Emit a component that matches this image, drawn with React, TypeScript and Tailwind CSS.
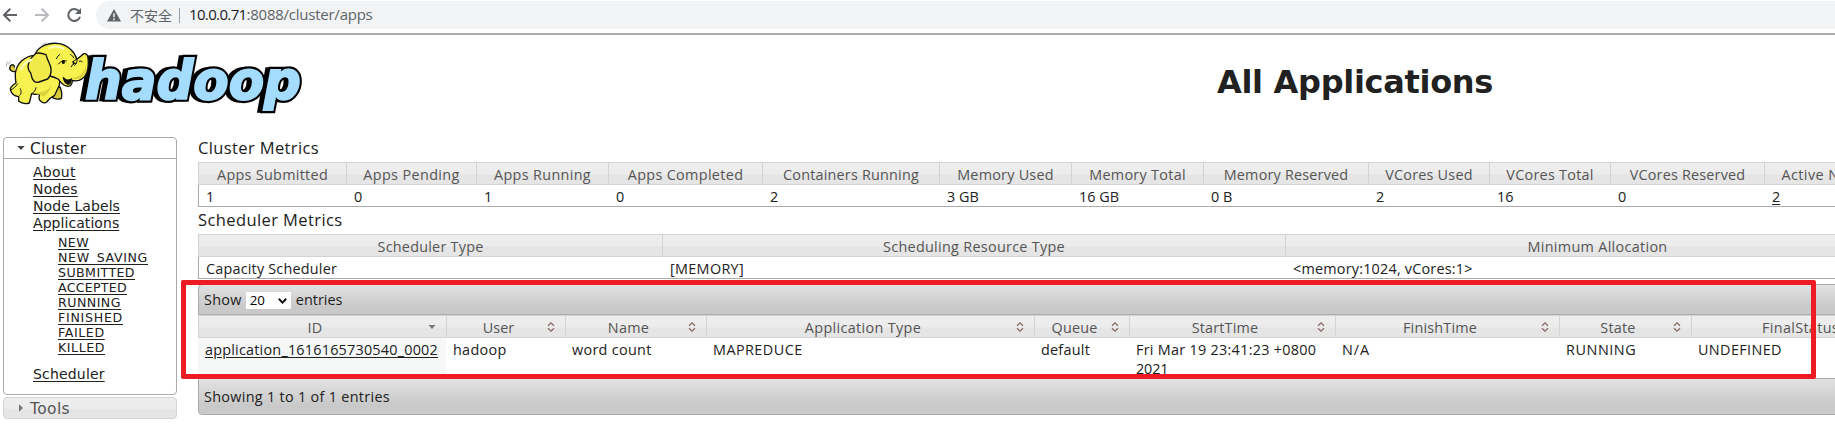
import React, { useLayoutEffect, useRef, useState } from "react";

/** Inline text whose letter spacing is tuned so that it takes up `w` pixels. */
function T({ w, children, className = "" }: { w?: number; children: string; className?: string }) {
  const ref = useRef<HTMLSpanElement>(null);
  const [spacing, setSpacing] = useState(0);
  useLayoutEffect(() => {
    if (!ref.current || !w) return;
    const natural = ref.current.getBoundingClientRect().width;
    setSpacing((w + 1 - natural) / children.length);
  }, [w, children]);
  return (
    <span ref={ref} className={`inline-block whitespace-pre ${className}`} style={{ letterSpacing: `${spacing}px` }}>
      {children}
    </span>
  );
}

const headBg = "bg-linear-to-b from-[#eeeeee] from-0% via-[#ececec] via-50% to-[#e5e5e5] to-60%";
const barBg = "bg-linear-to-b from-[#e2e2e2] to-[#c9c9c9] to-75%";

type Metric = { label: string; lw: number; value: string; col: string; link?: boolean };

const clusterMetrics: Metric[] = [
  { label: "Apps Submitted", lw: 110, value: "1", col: "w-[148px]" },
  { label: "Apps Pending", lw: 95.4, value: "0", col: "w-[130px]" },
  { label: "Apps Running", lw: 96, value: "1", col: "w-[132px]" },
  { label: "Apps Completed", lw: 114.6, value: "0", col: "w-[154px]" },
  { label: "Containers Running", lw: 135, value: "2", col: "w-[177px]" },
  { label: "Memory Used", lw: 95.7, value: "3 GB", col: "w-[132px]" },
  { label: "Memory Total", lw: 95.7, value: "16 GB", col: "w-[132px]" },
  { label: "Memory Reserved", lw: 123.6, value: "0 B", col: "w-[165px]" },
  { label: "VCores Used", lw: 86.4, value: "2", col: "w-[121px]" },
  { label: "VCores Total", lw: 86.4, value: "16", col: "w-[121px]" },
  { label: "VCores Reserved", lw: 114.6, value: "0", col: "w-[154px]" },
  { label: "Active Nodes", lw: 91, value: "2", col: "w-[126px]", link: true },
];

const schedulerMetrics = [
  { label: "Scheduler Type", lw: 105, value: "Capacity Scheduler", vw: 130, col: "w-[464px]" },
  { label: "Scheduling Resource Type", lw: 181, value: "[MEMORY]", vw: 73, col: "w-[623px]" },
  { label: "Minimum Allocation", lw: 139, value: "<memory:1024, vCores:1>", vw: 178.6, col: "w-[624px]" },
];

const appColumns = [
  { label: "ID", lw: 14, col: "w-[248px]", lines: [["application_1616165730540_0002", 232]], sorted: true },
  { label: "User", lw: 30.4, col: "w-[119px]", lines: [["hadoop", 52.5]] },
  { label: "Name", lw: 40.4, col: "w-[141px]", lines: [["word count", 78.6]] },
  { label: "Application Type", lw: 115.4, col: "w-[328px]", lines: [["MAPREDUCE", 88.6]] },
  { label: "Queue", lw: 45, col: "w-[95px]", lines: [["default", 48]] },
  { label: "StartTime", lw: 65.7, col: "w-[206px]", lines: [["Fri Mar 19 23:41:23 +0800", 179.3], ["2021", 31.4]] },
  { label: "FinishTime", lw: 73, col: "w-[224px]", lines: [["N/A", 27]] },
  { label: "State", lw: 34.3, col: "w-[132px]", lines: [["RUNNING", 69.3]] },
  { label: "FinalStatus", lw: 76, col: "w-[233px]", lines: [["UNDEFINED", 82.9]] },
] as { label: string; lw: number; col: string; lines: [string, number][]; sorted?: boolean }[];

const mainLinks: [string, number][] = [["About", 41.7], ["Nodes", 43.7], ["Node Labels", 86], ["Applications", 85.3]];
const stateLinks: [string, number][] = [
  ["NEW", 30], ["NEW_SAVING", 89], ["SUBMITTED", 76], ["ACCEPTED", 68],
  ["RUNNING", 62], ["FINISHED", 64], ["FAILED", 45.7], ["KILLED", 46],
];

function BrowserBar() {
  return (
    <div className="flex h-[35px] items-start border-b-2 border-[#ababab] bg-white">
      <svg className="mt-px h-7 w-[96px] shrink-0" viewBox="0 0 96 28" fill="none" strokeWidth="2">
        <path d="M17 14H4.5M10.3 7.7L4 14l6.3 6.3" stroke="#5f6368" />
        <path d="M35 14h12.5M41.7 7.7L48 14l-6.3 6.3" stroke="#b9babd" />
        <path d="M79 10.2A6 6 0 1 0 80 15.8" stroke="#5f6368" />
        <path d="M81 7v6h-6z" fill="#5f6368" />
      </svg>
      <div className="mt-px flex h-7 flex-1 items-center rounded-l-full bg-[#f1f3f4] pl-[11px] text-[15px]">
        <svg className="h-[13px] w-[14px]" viewBox="0 0 14 13">
          <path d="M7 0l7 12.5H0z" fill="#5f6368" />
          <path d="M7 4.3v4M7 9.6v1.6" stroke="#f1f3f4" strokeWidth="1.5" />
        </svg>
        <span className="mb-px ml-[9px] w-[43px] font-['Noto_Sans_CJK_SC',sans-serif] text-[14px] leading-7 text-[#5f6368]">不安全</span>
        <span className="ml-[6px] mr-[9px] h-[15px] w-px bg-[#9aa0a6]" />
        <T w={56.5} className="mb-[2px] text-[#202124]">10.0.0.71</T>
        <T w={125} className="mb-[2px] text-[#5f6368]">:8088/cluster/apps</T>
      </div>
    </div>
  );
}

function Logo() {
  const word = {
    x: 255,
    textLength: 648,
    lengthAdjust: "spacingAndGlyphs" as const,
    fontSize: 162,
    fontWeight: 700,
    fontStyle: "oblique",
    fontFamily: "'DejaVu Sans', sans-serif",
    strokeLinejoin: "miter" as const,
  };
  return (
    <svg className="block h-[95px] w-[320px]" viewBox="0 105 960 285">
      <text {...word} x={244} y={298} fill="#000" stroke="#000" strokeWidth="16">hadoop</text>
      <text {...word} y={296} fill="#000" stroke="#000" strokeWidth="19">hadoop</text>
      <text {...word} y={296} fill="#a3dcff" stroke="#a3dcff" strokeWidth="6">hadoop</text>
      <g transform="translate(0 114)" stroke="#111" strokeWidth="4" strokeLinejoin="round" strokeLinecap="round" fill="#f8f250">
        <path d="M46 100C34 104 26 94 31 84c5-7 13-3 12 3" fill="#d9c83c" />
        <path d="M20 84c-2-5-1-9 3-12M27 78c0-3 1-6 4-8M126 24c3-6 7-9 12-9M130 30c3-4 5-6 9-7" fill="none" stroke="#777" strokeWidth="2" />
        <path d="M160 150l-4 28c8 7 22 6 28 3 4-12 1-22-4-34z" fill="#d8cc3a" />
        <path d="M104 52C74 54 50 76 46 106c0 10 0 20 2 28-7 6-18 12-17 20 3 14 12 20 25 22l0 14c8 6 22 8 32 5l7-28c8 3 16 2 24 0-2 6-3 10-1 18 6 9 16 12 22 7 6-8 14-15 24-20l14-30 4-40z" />
        <path d="M100 164c14 3 42-4 54-20-4 16-12 24-24 32l-10-6z" fill="#ddd23e" stroke="none" />
        <path d="M52 138c-6 10-12 14-20 18M59 172c6-4 5-12 2-20M97 166c6-4 10-10 11-17" fill="none" strokeWidth="3" />
        <path d="M106 48C116 24 148 12 178 17c26 5 46 24 52 46 8-2 14-12 22-16 10-2 13 8 13 26 0 28-8 48-28 54-8 2-14 2-20 0 0 10-4 18-13 18-16-1-22-14-30-22-8-5-16-7-24-9z" />
        <path d="M215 118c24 2 38-14 44-40 1 24-8 40-24 45-8 2-14 0-20-5z" fill="#ddd23e" stroke="none" />
        <path d="M108 46C90 60 78 84 88 100c6 5 6 10 7 17 4 14 12 18 22 15l26-9c14-14 12-34 5-47-5-10-8-17-10-26-10-4-20-7-30-4z" fill="#f2e94a" />
        <path d="M64 92c8-16 20-24 30-26M150 30c14-6 30-4 40 2" stroke="#fffcb8" strokeWidth="7" fill="none" />
        <path d="M190 119c7 8 17 9 24 4-1 12-5 17-12 15-7-3-10-10-12-19z" fill="#171003" />
        <path d="M170 62c2-7 5-10 9-12M212 50c5 2 8 6 9 10M175 78c8-9 17-12 24-9M217 72c4-4 9-5 14-9M214 86c3-8 8-10 14-10M231 64c1 9-2 14-7 18M238 70c4-2 7-1 9 2" fill="none" strokeWidth="3" />
        <ellipse cx="190" cy="72" rx="5" ry="6" fill="#111" stroke="none" />
        <ellipse cx="221" cy="75" rx="3" ry="5" fill="#111" stroke="none" />
      </g>
    </svg>
  );
}

function Sidebar() {
  return (
    <nav className="w-[174px] shrink-0 font-['DejaVu_Sans',sans-serif] text-[#212121]">
      <div className="h-[258px] rounded-[4px] border border-[#aaa] bg-white">
        <div className="flex h-[21px] items-center border-b border-[#aaa] pl-[13px] text-[15.5px] leading-5">
          <svg className="mr-[5px] h-2 w-2" viewBox="0 0 8 8"><path d="M0.3 2h7.4L4 6z" fill="#454545" /></svg>
          <T w={55.3} className="mt-px">Cluster</T>
        </div>
        <ul className="pl-[29px] pt-[5px] text-[14px]">
          {mainLinks.map(([t, w]) => (
            <li key={t} className="h-[17px] leading-[17px]"><T w={w} className="underline underline-offset-2">{t}</T></li>
          ))}
        </ul>
        <ul className="pl-[54px] pt-[3px] text-[12.6px]">
          {stateLinks.map(([t, w]) => (
            <li key={t} className="h-[15px] leading-[15px]"><T w={w} className="underline underline-offset-2">{t}</T></li>
          ))}
        </ul>
        <div className="pl-[29px] pt-[11px] text-[14px] leading-[17px]"><T w={70.7} className="underline underline-offset-2">Scheduler</T></div>
      </div>
      <div className={`mt-[2px] flex h-[22px] items-center rounded-[4px] border border-[#d3d3d3] pl-[13px] text-[15.5px] leading-5 text-[#555] ${headBg}`}>
        <svg className="mr-[5px] h-2 w-2" viewBox="0 0 8 8"><path d="M2 0.3v7.4L6 4z" fill="#777" /></svg>
        <T w={39} className="mt-px">Tools</T>
      </div>
    </nav>
  );
}

function SortIcon({ sorted }: { sorted?: boolean }) {
  return (
    <svg className="mr-[10px] mt-[5px] h-[10px] w-[8px] shrink-0" viewBox="0 0 8 10" fill="none">
      {sorted ? <path d="M0.5 3h7L4 7z" fill="#777" /> : <path d="M1 3.8L4 0.9l3 2.9M1 6.2l3 2.9 3-2.9" stroke="#876b66" strokeWidth="1.3" />}
    </svg>
  );
}

function MetricHead({ label, w, col }: { label: string; w: number; col: string }) {
  return (
    <div className={`shrink-0 border-r border-[#d3d3d3] pt-px text-center leading-[21px] text-[#555] ${col}`}><T w={w}>{label}</T></div>
  );
}

export default function App() {
  return (
    <div className="relative h-[445px] w-[1835px] overflow-hidden bg-white font-['Open_Sans','Noto_Sans',sans-serif] text-[14.4px] text-[#212121]">
      <BrowserBar />
      <header className="flex h-[102px] items-start">
        <Logo />
        <h1 className="ml-[897px] mt-[27px] font-['DejaVu_Sans',sans-serif] text-[32px] font-bold leading-[40px]"><T w={275}>All Applications</T></h1>
      </header>
      <div className="flex pl-[3px]">
        <Sidebar />
        <main className="ml-[21px] w-[1718px] shrink-0">
          <h2 className="h-[25px] pt-px text-[16.5px] leading-[19px]"><T w={120}>Cluster Metrics</T></h2>
          <section className="border-b border-l border-[#aaa]">
            <div className={`-ml-px flex h-[23px] border border-[#d3d3d3] ${headBg}`}>
              {clusterMetrics.map((m) => <MetricHead key={m.label} label={m.label} w={m.lw} col={m.col} />)}
            </div>
            <div className="flex h-[21px] leading-[23px]">
              {clusterMetrics.map((m) => (
                <div key={m.label} className={`shrink-0 pl-[7px] ${m.col} ${m.link ? "underline underline-offset-2" : ""}`}>{m.value}</div>
              ))}
            </div>
          </section>
          <h2 className="h-[27px] pt-[3px] text-[16.5px] leading-[19px]"><T w={143.6}>Scheduler Metrics</T></h2>
          <section className="border-b border-l border-[#aaa]">
            <div className={`-ml-px flex h-[23px] border border-[#d3d3d3] ${headBg}`}>
              {schedulerMetrics.map((m) => <MetricHead key={m.label} label={m.label} w={m.lw} col={m.col} />)}
            </div>
            <div className="flex h-[21px] leading-[23px]">
              {schedulerMetrics.map((m) => (
                <div key={m.label} className={`shrink-0 pl-[7px] ${m.col}`}><T w={m.vw}>{m.value}</T></div>
              ))}
            </div>
          </section>

          <section className="mt-[5px]">
            <div className={`flex h-[31px] items-center rounded-tl-[4px] border border-[#aaa] pl-[5px] ${barBg}`}>
              <T w={36.8}>Show</T>
              <span className="ml-[4px] mr-[5px] mt-[2px] flex h-[17px] w-[45px] items-center bg-white pl-[4px] text-[13.3px] leading-[17px] text-black">
                <T w={14}>20</T>
                <svg className="ml-[13px] h-[6px] w-[9px]" viewBox="0 0 9 6" fill="none"><path d="M0.8 0.8l3.7 3.8L8.2 0.8" stroke="#111" strokeWidth="2" /></svg>
              </span>
              <T w={45.7}>entries</T>
            </div>
            <div className={`flex h-[23px] border-y border-l border-[#d3d3d3] ${headBg}`}>
              {appColumns.map((c) => (
                <div key={c.label} className={`flex shrink-0 items-start border-r border-[#d3d3d3] pt-px leading-[21px] text-[#555] ${c.col}`}>
                  <div className="flex-1 pl-[3px] text-center"><T w={c.lw}>{c.label}</T></div>
                  <SortIcon sorted={c.sorted} />
                </div>
              ))}
            </div>
            <div className="flex h-[40px]">
              {appColumns.map((c) => (
                <div key={c.label} className={`shrink-0 pl-[7px] pt-[2px] ${c.col} ${c.sorted ? "bg-[#f6f8f8]" : ""}`}>
                  {c.lines.map(([t, w]) => (
                    <div key={t} className="h-[19px] leading-[19px]"><T w={w} className={c.sorted ? "underline underline-offset-2" : ""}>{t}</T></div>
                  ))}
                </div>
              ))}
            </div>
            <div className={`flex h-[37px] items-center rounded-bl-[4px] border border-[#aaa] pl-[5px] ${barBg}`}>
              <T w={185}>Showing 1 to 1 of 1 entries</T>
            </div>
          </section>
        </main>
      </div>
      <div className="pointer-events-none absolute left-[181px] top-[280px] h-[99px] w-[1634.5px] rounded-[2px] border-[5px] border-[#ed1c24]" />
    </div>
  );
}
